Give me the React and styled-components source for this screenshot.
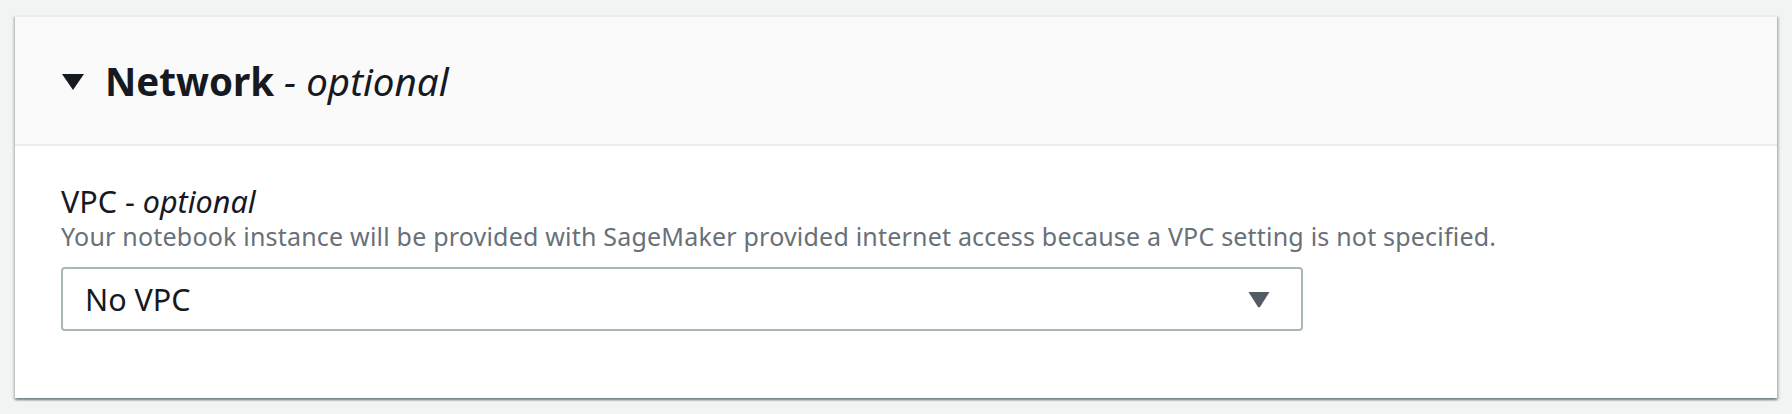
import React from "react";
import styled, { createGlobalStyle } from "styled-components";

const GlobalStyle = createGlobalStyle`
  html, body {
    margin: 0;
    padding: 0;
    background: #f2f3f3;
  }
  body {
    font-family: "Noto Sans", "Open Sans", Arial, sans-serif;
    color: #16191f;
  }
`;

const Page = styled.div`
  padding: 15px 15px 16px 15px;
`;

const Card = styled.section`
  background: #ffffff;
  border-top: 2px solid #eaeded;
  box-shadow: 0 2px 2px 0 rgba(0, 28, 36, 0.35),
    2px 2px 2px 0 rgba(0, 28, 36, 0.18), -2px 2px 2px 0 rgba(0, 28, 36, 0.12);
`;

const Header = styled.div`
  display: flex;
  align-items: center;
  gap: 21px;
  height: 127px;
  padding-left: 47px;
  background: #fafafa;
  border-bottom: 2px solid #eaeded;
  cursor: pointer;
`;

const Caret = styled.span`
  display: block;
  width: 0;
  height: 0;
  margin-top: 3px;
  border-left: 11px solid transparent;
  border-right: 11px solid transparent;
  border-top: 16px solid ${(p) => p.color || "#16191f"};
`;

const Title = styled.h2`
  margin: 0;
  font-size: 38.5px;
  line-height: 52px;
  font-weight: 700;
  color: #16191f;

  em {
    font-weight: 400;
  }
`;

const Body = styled.div`
  padding: 37px 46px 67px 46px;
`;

const Label = styled.label`
  display: block;
  font-size: 30.5px;
  line-height: 36px;
  color: #16191f;
`;

const Description = styled.div`
  margin-top: 1px;
  font-size: 25px;
  letter-spacing: 0.2px;
  line-height: 32px;
  color: #687078;
`;

const Select = styled.div`
  display: flex;
  align-items: center;
  justify-content: space-between;
  box-sizing: border-box;
  width: 1242px;
  height: 64px;
  margin-top: 15px;
  padding: 0 31px 0 22px;
  border: 2px solid #aab7b8;
  border-radius: 4px;
  background: #ffffff;
  font-size: 30.5px;
  line-height: 36px;
  color: #16191f;
`;

const ArrowIcon = () => (
  <svg width="22" height="17" viewBox="0 0 22 17" aria-hidden="true">
    <path d="M0.5 1 L21.5 1 L12.3 15.4 Q11 17.2 9.7 15.4 Z" fill="#545b64" />
  </svg>
);

export default function App() {
  return (
    <>
      <GlobalStyle />
      <Page>
        <Card>
          <Header>
            <Caret />
            <Title>
              Network <em>- optional</em>
            </Title>
          </Header>
          <Body>
            <Label>
              VPC - <em>optional</em>
            </Label>
            <Description>
              Your notebook instance will be provided with SageMaker provided
              internet access because a VPC setting is not specified.
            </Description>
            <Select role="button">
              <span>No VPC</span>
              <ArrowIcon />
            </Select>
          </Body>
        </Card>
      </Page>
    </>
  );
}
